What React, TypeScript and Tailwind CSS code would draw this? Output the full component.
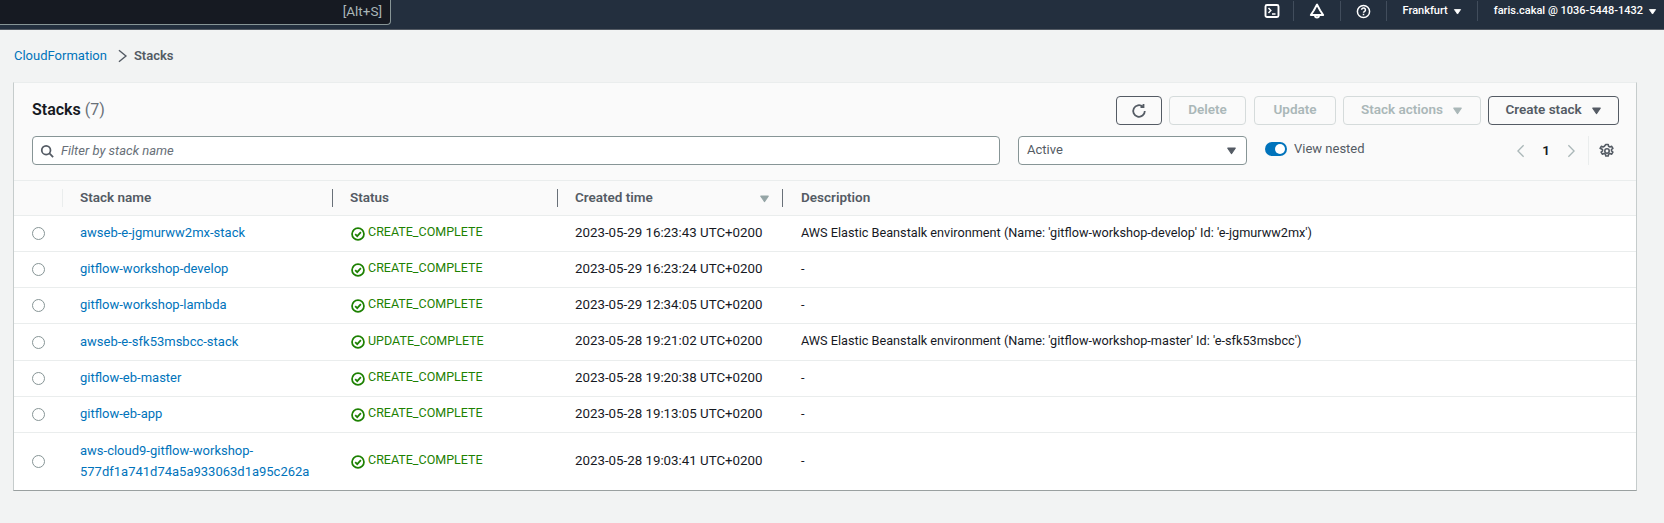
import React from "react";

const rows = [
  { name: ["awseb-e-jgmurww2mx-stack"], status: "CREATE_COMPLETE", time: "2023-05-29 16:23:43 UTC+0200", desc: "AWS Elastic Beanstalk environment (Name: 'gitflow-workshop-develop' Id: 'e-jgmurww2mx')", h: "h-[36px]" },
  { name: ["gitflow-workshop-develop"], status: "CREATE_COMPLETE", time: "2023-05-29 16:23:24 UTC+0200", desc: "-", h: "h-[36px]" },
  { name: ["gitflow-workshop-lambda"], status: "CREATE_COMPLETE", time: "2023-05-29 12:34:05 UTC+0200", desc: "-", h: "h-[36px]" },
  { name: ["awseb-e-sfk53msbcc-stack"], status: "UPDATE_COMPLETE", time: "2023-05-28 19:21:02 UTC+0200", desc: "AWS Elastic Beanstalk environment (Name: 'gitflow-workshop-master' Id: 'e-sfk53msbcc')", h: "h-[37px]" },
  { name: ["gitflow-eb-master"], status: "CREATE_COMPLETE", time: "2023-05-28 19:20:38 UTC+0200", desc: "-", h: "h-[36px]" },
  { name: ["gitflow-eb-app"], status: "CREATE_COMPLETE", time: "2023-05-28 19:13:05 UTC+0200", desc: "-", h: "h-[36px]" },
  { name: ["aws-cloud9-gitflow-workshop-", "577df1a741d74a5a933063d1a95c262a"], status: "CREATE_COMPLETE", time: "2023-05-28 19:03:41 UTC+0200", desc: "-", h: "h-[57px]" },
];

const Caret = ({ className }: { className: string }) => (
  <svg viewBox="0 0 16 16" className={className} fill="currentColor" stroke="currentColor" strokeWidth="1.5" strokeLinejoin="round">
    <path d="M2.500 4.500h11L8 12.500z" />
  </svg>
);

const Check = () => (
  <svg viewBox="0 0 16 16" className="w-[14px] h-[14px] text-[#1d8102] shrink-0" fill="none" stroke="currentColor" strokeWidth="2">
    <circle cx="8" cy="8" r="6.8" />
    <path d="M4.800 8.200l2.300 2.300 4.200-4.600" />
  </svg>
);

const Divider = () => <div className="w-px h-[20px] bg-[#414d5c]" />;

const grid = "grid grid-cols-[49px_270px_225px_225px_1fr]";

export default function App() {
  return (
    <div className="w-[1664px] h-[523px] overflow-hidden bg-[#f2f3f3] text-[13px] text-[#16191f]" style={{ fontFamily: 'Roboto, sans-serif' }}>
      <header className="h-[30px] bg-[#232f3e] border-b border-[#545b64] flex items-start justify-between">
        <div className="w-[391px] h-[25px] bg-[#161a22] border-r border-b border-[#879596] rounded-br-sm flex items-center justify-end pr-[8px] text-[#aab7b8] text-[13.5px] pb-[1px]">[Alt+S]</div>
        <div className="flex items-center h-[22px] text-white text-[11px] font-medium">
          <svg viewBox="0 0 16 16" className="w-[16px] h-[16px] mr-[13px]" fill="none" stroke="currentColor" strokeWidth="1.9">
            <rect x="1.500" y="2" width="13" height="12" rx="1.500" />
            <path d="M4.500 5l2.300 2.500-2.300 2.500M8 11h3.500" strokeWidth="1.500" />
          </svg>
          <Divider />
          <svg viewBox="0 0 16 16" className="w-[16px] h-[16px] mx-[15px]" fill="none" stroke="currentColor" strokeWidth="1.900">
            <path d="M8 1.500L4.800 7.500 1.800 12h12.400l-3-4.500z" strokeLinejoin="round" />
            <path d="M6 12.500a2 2 0 004 0" />
          </svg>
          <Divider />
          <svg viewBox="0 0 16 16" className="w-[15px] h-[15px] mx-[15px]" fill="none" stroke="currentColor" strokeWidth="1.600">
            <circle cx="8" cy="8" r="6.500" />
            <path d="M5.900 6.200a2.100 2.100 0 114 1c-.6.7-1.900 1-1.900 2.200M8 10.500v1.600" />
          </svg>
          <Divider />
          <span className="ml-[16px]">Frankfurt</span>
          <Caret className="w-[9px] h-[9px] ml-[5px] mr-[15px]" />
          <Divider />
          <span className="ml-[16px]">faris.cakal @ 1036-5448-1432</span>
          <Caret className="w-[9px] h-[9px] ml-[5px] mr-[7px]" />
        </div>
      </header>

      <nav className="h-[52px] pl-[14px] flex items-center">
        <span className="text-[#0073bb] text-[13px]">CloudFormation</span>
        <svg viewBox="0 0 16 16" className="w-[14px] h-[14px] text-[#545b64] ml-[8px] mr-[5px]" fill="none" stroke="currentColor" strokeWidth="1.600"><path d="M4.500 1.500L12.500 8l-8 6.500" /></svg>
        <span className="text-[#545b64] font-semibold text-[13px]">Stacks</span>
      </nav>

      <section className="ml-[13px] w-[1624px] bg-white border border-[#eaeded] border-l-[#c6cccc] border-r-[#c6cccc] border-b-[#9aa0a0]">
        <div className="h-[98px] bg-[#fafafa] border-b border-[#eaeded] pl-[18px] pr-[17px] pt-[13px]">
          <div className="flex items-center justify-between h-[29px]">
            <div className="text-[16px] pb-[2px]"><span className="font-semibold">Stacks</span> <span className="text-[#687078]">(7)</span></div>
            <div className="flex items-center text-[13.5px] font-semibold">
              <button className="w-[46px] h-[29px] border border-[#545b64] rounded-sm flex items-center justify-center text-[#545b64] mr-[7px]">
                <svg viewBox="0 0 16 16" className="w-[16px] h-[16px]" fill="none" stroke="currentColor" strokeWidth="1.800"><path d="M13.800 8a5.800 5.800 0 11-2-4.400M12.500 1v3h-3" /></svg>
              </button>
              <button className="w-[77px] h-[29px] pb-[2px] border border-[#d5dbdb] rounded-sm text-[#aab7b8] mr-[8px]">Delete</button>
              <button className="w-[82px] h-[29px] pb-[2px] border border-[#d5dbdb] rounded-sm text-[#aab7b8] mr-[7px]">Update</button>
              <button className="w-[138px] h-[29px] border border-[#d5dbdb] rounded-sm text-[#aab7b8] mr-[7px] flex items-center justify-center gap-[9px]"><span className="pb-[2px]">Stack actions</span> <Caret className="w-[11px] h-[11px]" /></button>
              <button className="w-[131px] h-[29px] border border-[#545b64] rounded-sm text-[#545b64] flex items-center justify-center gap-[9px]"><span className="pb-[2px]">Create stack</span> <Caret className="w-[11px] h-[11px]" /></button>
            </div>
          </div>
          <div className="flex items-start mt-[11px]">
            <div className="w-[968px] h-[29px] bg-white border border-[#879596] rounded-sm flex items-center pl-[7px] mr-[18px]">
              <svg viewBox="0 0 16 16" className="w-[14px] h-[14px] text-[#545b64] mr-[7px]" fill="none" stroke="currentColor" strokeWidth="2"><circle cx="7" cy="7" r="5" /><path d="M10.500 10.500L15 15" /></svg>
              <span className="italic text-[#687078]">Filter by stack name</span>
            </div>
            <div className="w-[229px] h-[29px] bg-white border border-[#879596] rounded-sm flex items-center justify-between pl-[8px] pr-[9px] mr-[18px]">
              <span className="text-[#545b64] pb-[2px]">Active</span>
              <Caret className="w-[11px] h-[11px] text-[#545b64]" />
            </div>
            <div className="h-[26px] flex items-center">
              <div className="w-[22px] h-[14px] bg-[#0073bb] rounded-full flex items-center justify-end pr-[2px]">
                <div className="w-[10px] h-[10px] bg-white rounded-full" />
              </div>
            </div>
            <span className="ml-[7px] h-[25px] flex items-center text-[#545b64]">View nested</span>
            <div className="ml-auto flex items-center h-[29px] text-[#aab7b8]">
              <svg viewBox="0 0 16 16" className="w-[14px] h-[14px] mr-[14px]" fill="none" stroke="currentColor" strokeWidth="1.500"><path d="M11 1.500L4.500 8l6.500 6.500" /></svg>
              <span className="text-[#16191f] font-semibold mr-[14px] text-[13.5px]">1</span>
              <svg viewBox="0 0 16 16" className="w-[14px] h-[14px] mr-[10px]" fill="none" stroke="currentColor" strokeWidth="1.500"><path d="M5 1.500L11.500 8 5 14.500" /></svg>
              <div className="w-px h-[29px] bg-[#eaeded] mr-[10px]" />
              <svg viewBox="0 0 16 16" className="w-[16px] h-[16px] text-[#545b64] mr-[4px]" fill="none" stroke="currentColor" strokeWidth="1.600"><circle cx="8" cy="8" r="2.200" /><path d="M6.800 1.500h2.400l.4 1.800 1.400.7 1.700-.7 1.200 2-1.400 1.200v1.500l1.400 1.200-1.200 2-1.700-.7-1.400.7-.4 1.800H6.800l-.4-1.800-1.400-.7-1.700.7-1.200-2 1.400-1.200V6.500L1.100 5.300l1.200-2 1.700.7 1.400-.7z" strokeLinejoin="round" /></svg>
            </div>
          </div>
        </div>

        <div className={`${grid} h-[35px] bg-[#fafafa] border-b border-[#eaeded] items-center font-semibold text-[#545b64] text-[13.5px]`}>
          <div className="h-[18px] border-r border-[#eaeded]" />
          <div className="h-[18px] pl-[17px] pb-[2px] border-r border-[#687078] flex items-center">Stack name</div>
          <div className="h-[18px] pl-[17px] pb-[2px] border-r border-[#687078] flex items-center">Status</div>
          <div className="h-[18px] pl-[17px] pr-[12px] border-r border-[#687078] flex items-center justify-between"><span className="pb-[2px]">Created time</span> <Caret className="w-[11px] h-[11px] text-[#95a5a6]" /></div>
          <div className="h-[18px] pl-[18px] pb-[2px] flex items-center">Description</div>
        </div>

        {rows.map((r, i) => (
          <div key={i} className={`${grid} ${r.h} items-center bg-white ${i < rows.length - 1 ? "border-b border-[#eaeded]" : ""}`}>
            <div className="pl-[18px]"><div className="w-[13px] h-[13px] rounded-full border border-[#879596] bg-white" /></div>
            <div className="pl-[17px] pb-[2px] text-[#0073bb] text-[13px] leading-[21px]">{r.name.map((n) => <div key={n}>{n}</div>)}</div>
            <div className="pl-[18px] flex items-center gap-[3px] text-[#1d8102] text-[12.5px]"><Check /><span className="pb-[2px]">{r.status}</span></div>
            <div className="pl-[17px] pb-[2px] text-[#16191f] text-[13.3px]">{r.time}</div>
            <div className="pl-[18px] pb-[2px] text-[#16191f] text-[12.7px]">{r.desc}</div>
          </div>
        ))}
      </section>
    </div>
  );
}
